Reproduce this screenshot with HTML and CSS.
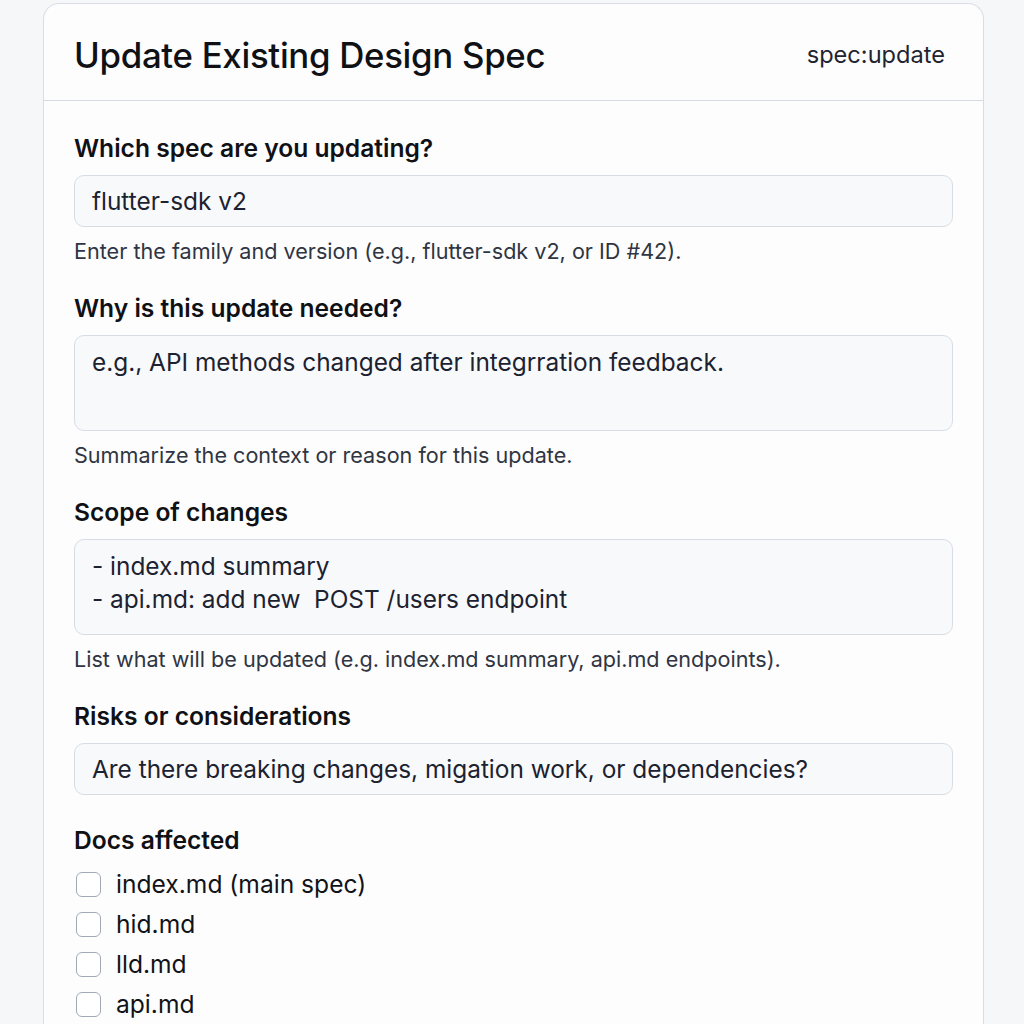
FILE: index.html
```html
<!DOCTYPE html>
<html lang="en">
<head>
<meta charset="utf-8">
<title>Update Existing Design Spec</title>
<link rel="stylesheet" href="styles.css">
</head>
<body>
<main class="card">
  <header class="card-header">
    <h1 class="title">Update Existing Design Spec</h1>
    <span class="tag">spec:update</span>
  </header>
  <form class="card-body">
    <section class="field">
      <label class="label">Which spec are you updating?</label>
      <div class="input">flutter-sdk v2</div>
      <p class="help">Enter the family and version (e.g., flutter-sdk v2, or ID #42).</p>
    </section>
    <section class="field">
      <label class="label">Why is this update needed?</label>
      <div class="input textarea">e.g., API methods changed after integrration feedback.</div>
      <p class="help">Summarize the context or reason for this update.</p>
    </section>
    <section class="field">
      <label class="label">Scope of changes</label>
      <div class="input textarea">- index.md summary
- api.md: add new  POST /users endpoint</div>
      <p class="help">List what will be updated (e.g. index.md summary, api.md endpoints).</p>
    </section>
    <section class="field">
      <label class="label">Risks or considerations</label>
      <div class="input">Are there breaking changes, migation work, or dependencies?</div>
    </section>
    <section class="field">
      <label class="label">Docs affected</label>
      <ul class="checks">
        <li class="check"><span class="box"></span>index.md (main spec)</li>
        <li class="check"><span class="box"></span>hid.md</li>
        <li class="check"><span class="box"></span>lld.md</li>
        <li class="check"><span class="box"></span>api.md</li>
      </ul>
    </section>
  </form>
</main>
</body>
</html>
```
FILE: styles.css
```css
* { box-sizing: border-box; }
html, body { margin: 0; padding: 0; }
body {
  background: #f6f7f9;
  font-family: Inter, "Noto Sans", "Liberation Sans", sans-serif;
  color: #111318;
  padding: 3px 40px 0 43px;
}
.card {
  width: 941px;
  background: #fdfdfe;
  border: 1px solid #d9dde5;
  border-bottom: none;
  border-radius: 16px 16px 0 0;
}
.card-header {
  height: 97px;
  display: flex;
  align-items: center;
  justify-content: space-between;
  padding: 5px 38px 0 30px;
  border-bottom: 1px solid #d6dae3;
}
.title {
  margin: 0;
  font-size: 34.8px;
  font-weight: 500;
  letter-spacing: -0.3px;
  color: #0f1115;
}
.tag {
  font-size: 23.6px;
  color: #1f2430;
}
.card-body {
  display: flex;
  flex-direction: column;
  gap: 30px;
  padding: 32px 30px 40px 30px;
}
.field {
  display: flex;
  flex-direction: column;
}
.label {
  font-size: 24.6px;
  font-weight: 600;
  line-height: 30px;
  color: #0f1115;
}
.input {
  margin-top: 12px;
  height: 52px;
  background: #f8f9fb;
  border: 1px solid #d8dce4;
  border-radius: 10px;
  padding: 0 17px;
  display: flex;
  align-items: center;
  font-size: 24.4px;
  color: #1c2230;
  white-space: nowrap;
}
.textarea {
  height: 96px;
  display: block;
  padding: 10px 17px;
  line-height: 33px;
  white-space: pre-wrap;
}
.help {
  margin: 12px 0 0;
  font-size: 21.6px;
  line-height: 24px;
  color: #2f3542;
}
.checks {
  list-style: none;
  margin: 14px 0 0;
  padding: 0;
  display: flex;
  flex-direction: column;
  gap: 10px;
}
.check {
  display: flex;
  align-items: center;
  height: 30px;
  font-size: 24.6px;
  color: #111318;
}
.box {
  width: 25px;
  height: 25px;
  margin-left: 2px;
  margin-right: 15px;
  border: 1.5px solid #a3a9b4;
  border-radius: 6px;
  background: #fff;
}
```
